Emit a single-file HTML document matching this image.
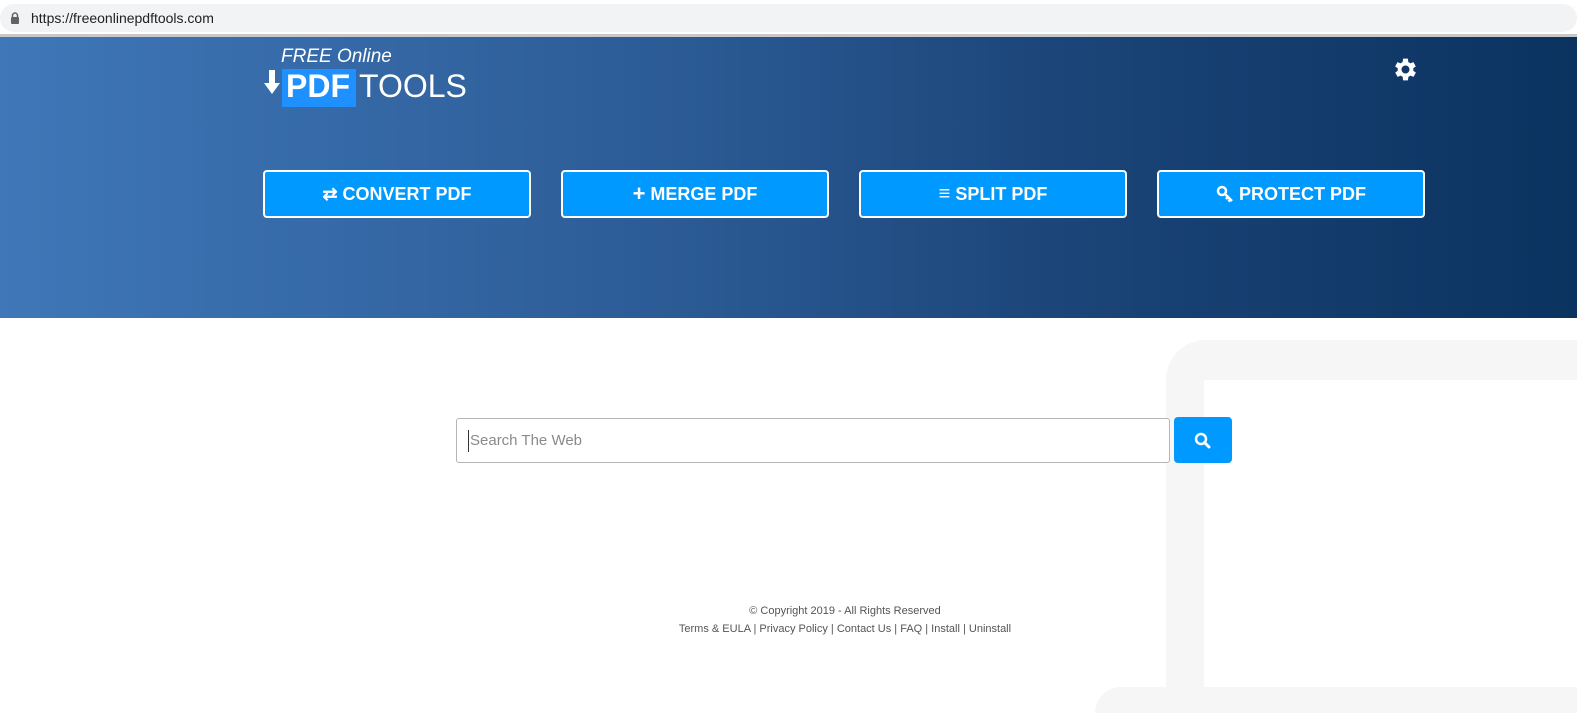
<!DOCTYPE html>
<html style="overflow:hidden;height:713px"><head><meta charset="utf-8"><style>
*{margin:0;padding:0;box-sizing:border-box}
body{width:1577px;height:713px;overflow:hidden;background:#fff;font-family:"Liberation Sans",sans-serif;position:relative}
.bar{position:absolute;left:0;top:0;width:1577px;height:35px;background:#fff}
.url{position:absolute;left:0;top:4px;width:1577px;height:28px;background:#f1f3f4;border-radius:14px}
.url span{position:absolute;left:31px;top:6px;font-size:14px;color:#202124}
.line{position:absolute;left:0;top:34px;width:1577px;height:3px;background:#c8c8c8}
.hdr{position:absolute;left:0;top:37px;width:1577px;height:281px;background:linear-gradient(90deg,#3f77b8 0%,#2d5d98 40%,#1a4376 70%,#0b3360 100%)}
.btn{position:absolute;top:170px;width:268px;height:48px;background:#0099ff;border:2px solid #fff;border-radius:4px;color:#fff;font-weight:bold;font-size:18px;display:flex;align-items:center;justify-content:center;gap:5px}
.lap1{position:absolute;left:1166px;top:340px;width:500px;height:360px;background:#f6f6f6;border-radius:40px 0 0 0}
.lap2{position:absolute;left:1204px;top:380px;width:400px;height:307px;background:#fff}
.lap3{position:absolute;left:1095px;top:687px;width:600px;height:26px;background:#f6f6f6;border-radius:60px 0 0 0}
.inp{position:absolute;left:456px;top:418px;width:714px;height:45px;border:1px solid #b5b5b5;border-radius:3px;background:#fff}
.inp span{position:absolute;left:13px;top:13px;font-size:15px;color:#8a8a8a}
.inp i{position:absolute;left:11px;top:11px;width:1px;height:22px;background:#333}
.sb{position:absolute;left:1174px;top:417px;width:58px;height:46px;background:#0099ff;border-radius:4px}
.ft{position:absolute;left:0;width:1690px;text-align:center;font-size:11px;color:#555}
</style></head><body>
<div class="bar"><div class="url">
<svg style="position:absolute;left:10px;top:8px" width="10" height="12" viewBox="0 0 10 12"><rect x="1" y="5" width="8" height="7" rx="1" fill="#5f6368"/><path d="M2.5 5V3.5a2.5 2.5 0 0 1 5 0V5" stroke="#5f6368" stroke-width="1.5" fill="none"/></svg>
<span>https://freeonlinepdftools.com</span></div></div>
<div class="line"></div>
<div class="hdr"></div>
<div style="position:absolute;left:281px;top:46px;color:#fff;font-style:italic;font-size:19px">FREE Online</div>
<svg style="position:absolute;left:264px;top:70px" width="16" height="26" viewBox="0 0 16 26"><rect x="5" y="0" width="6" height="14" fill="#fff"/><path d="M0 13h16l-8 11z" fill="#fff"/></svg>
<div style="position:absolute;left:282px;top:69px;width:74px;height:38px;background:#1e90ff"></div>
<div style="position:absolute;left:286px;top:68px;color:#fff;font-weight:bold;font-size:32px">PDF</div>
<div style="position:absolute;left:359px;top:68px;color:#fff;font-size:32px">TOOLS</div>
<svg style="position:absolute;left:1391px;top:55px" width="29" height="29" viewBox="0 0 24 24"><path fill="#fff" d="M19.4 13a7.5 7.5 0 0 0 0-2l2.1-1.6-2-3.5-2.5 1a7 7 0 0 0-1.7-1L15 3h-4l-.4 2.9a7 7 0 0 0-1.7 1l-2.5-1-2 3.5L6.6 11a7.5 7.5 0 0 0 0 2l-2.1 1.6 2 3.5 2.5-1a7 7 0 0 0 1.7 1L11 21h4l.4-2.9a7 7 0 0 0 1.7-1l2.5 1 2-3.5zM13 15.3a3.3 3.3 0 1 1 0-6.6 3.3 3.3 0 0 1 0 6.6z" transform="translate(-1 0)"/></svg>
<div class="btn" style="left:263px">⇄ CONVERT PDF</div>
<div class="btn" style="left:561px"><span style="font-size:22px">+</span>MERGE PDF</div>
<div class="btn" style="left:859px"><span style="font-size:20px">≡</span>SPLIT PDF</div>
<div class="btn" style="left:1157px"><svg width="18" height="18" viewBox="0 0 18 18"><circle cx="6" cy="6" r="4" stroke="#fff" stroke-width="2.5" fill="none"/><path d="M9 9l7 7M12 12l-2 2M14.5 14.5l-2 2" stroke="#fff" stroke-width="2.5"/></svg>PROTECT PDF</div>
<div class="lap1"></div><div class="lap2"></div><div class="lap3"></div>
<div class="inp"><i></i><span>Search The Web</span></div>
<div class="sb"><svg style="position:absolute;left:20px;top:15px" width="17" height="17" viewBox="0 0 17 17"><circle cx="7" cy="7" r="5" stroke="#fff" stroke-width="2.5" fill="none"/><path d="M10.5 10.5l4.5 4.5" stroke="#fff" stroke-width="3" stroke-linecap="round"/></svg></div>
<div class="ft" style="top:605px">© Copyright 2019 - All Rights Reserved</div>
<div class="ft" style="top:623px">Terms &amp; EULA | Privacy Policy | Contact Us | FAQ | Install | Uninstall</div>
</body></html>
